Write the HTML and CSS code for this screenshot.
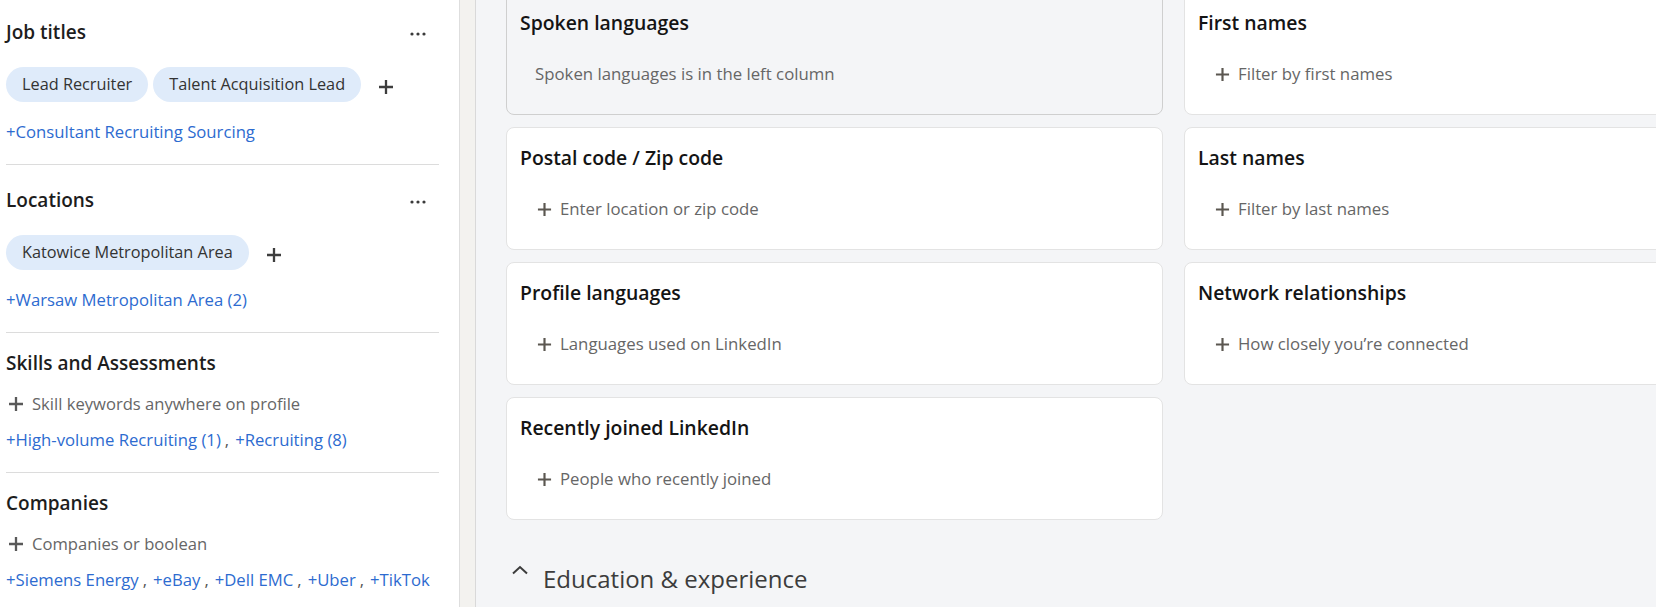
FILE: index.html
```html
<!DOCTYPE html>
<html lang="en">
<head>
    <meta charset="UTF-8">
    <meta name="viewport" content="width=device-width, initial-scale=1.0">
    <title>Search filters</title>
    <link rel="stylesheet" href="styles.css">
</head>
<body>
    <aside class="filters">
        <section class="filter">
            <div class="filter-head">
                <h3>Job titles</h3>
                <button class="more" aria-label="More options">
                    <svg width="16" height="4" viewBox="0 0 16 4"><circle cx="2" cy="2" r="1.6"/><circle cx="8" cy="2" r="1.6"/><circle cx="14" cy="2" r="1.6"/></svg>
                </button>
            </div>
            <div class="chips">
                <span class="chip">Lead Recruiter</span>
                <span class="chip">Talent Acquisition Lead</span>
                <button class="add-chip" aria-label="Add">
                    <svg width="16" height="16" viewBox="0 0 16 16"><path d="M8 1v14M1 8h14"/></svg>
                </button>
            </div>
            <div class="suggest"><a href="#">+Consultant Recruiting Sourcing</a></div>
        </section>

        <section class="filter">
            <div class="filter-head">
                <h3>Locations</h3>
                <button class="more" aria-label="More options">
                    <svg width="16" height="4" viewBox="0 0 16 4"><circle cx="2" cy="2" r="1.6"/><circle cx="8" cy="2" r="1.6"/><circle cx="14" cy="2" r="1.6"/></svg>
                </button>
            </div>
            <div class="chips">
                <span class="chip">Katowice Metropolitan Area</span>
                <button class="add-chip" aria-label="Add">
                    <svg width="16" height="16" viewBox="0 0 16 16"><path d="M8 1v14M1 8h14"/></svg>
                </button>
            </div>
            <div class="suggest"><a href="#">+Warsaw Metropolitan Area (2)</a></div>
        </section>

        <section class="filter">
            <div class="filter-head">
                <h3>Skills and Assessments</h3>
            </div>
            <div class="add-row">
                <svg width="16" height="16" viewBox="0 0 16 16"><path d="M8 1v14M1 8h14"/></svg>
                <span>Skill keywords anywhere on profile</span>
            </div>
            <div class="suggest tight"><a href="#">+High-volume Recruiting (1)</a><span class="sep">,</span><a href="#">+Recruiting (8)</a></div>
        </section>

        <section class="filter">
            <div class="filter-head">
                <h3>Companies</h3>
            </div>
            <div class="add-row">
                <svg width="16" height="16" viewBox="0 0 16 16"><path d="M8 1v14M1 8h14"/></svg>
                <span>Companies or boolean</span>
            </div>
            <div class="suggest tight"><a href="#">+Siemens Energy</a><span class="sep">,</span><a href="#">+eBay</a><span class="sep">,</span><a href="#">+Dell EMC</a><span class="sep">,</span><a href="#">+Uber</a><span class="sep">,</span><a href="#">+TikTok</a></div>
        </section>
    </aside>

    <div class="gutter"></div>

    <main class="content">
        <div class="card-grid">
            <div class="card disabled">
                <h4>Spoken languages</h4>
                <p class="note">Spoken languages is in the left column</p>
            </div>
            <div class="card">
                <h4>First names</h4>
                <div class="placeholder"><svg width="15" height="15" viewBox="0 0 16 16"><path d="M8 1v14M1 8h14"/></svg>Filter by first names</div>
            </div>
            <div class="card">
                <h4>Postal code / Zip code</h4>
                <div class="placeholder"><svg width="15" height="15" viewBox="0 0 16 16"><path d="M8 1v14M1 8h14"/></svg>Enter location or zip code</div>
            </div>
            <div class="card">
                <h4>Last names</h4>
                <div class="placeholder"><svg width="15" height="15" viewBox="0 0 16 16"><path d="M8 1v14M1 8h14"/></svg>Filter by last names</div>
            </div>
            <div class="card">
                <h4>Profile languages</h4>
                <div class="placeholder"><svg width="15" height="15" viewBox="0 0 16 16"><path d="M8 1v14M1 8h14"/></svg>Languages used on LinkedIn</div>
            </div>
            <div class="card">
                <h4>Network relationships</h4>
                <div class="placeholder"><svg width="15" height="15" viewBox="0 0 16 16"><path d="M8 1v14M1 8h14"/></svg>How closely you’re connected</div>
            </div>
            <div class="card">
                <h4>Recently joined LinkedIn</h4>
                <div class="placeholder"><svg width="15" height="15" viewBox="0 0 16 16"><path d="M8 1v14M1 8h14"/></svg>People who recently joined</div>
            </div>
        </div>

        <h2 class="group-title">
            <svg width="18" height="10" viewBox="0 0 18 10"><path d="M2 8.5L9 2 16 8.5"/></svg>
            Education &amp; experience
        </h2>
    </main>
</body>
</html>
```

FILE: styles.css
```css
* {
    box-sizing: border-box;
}
body {
    margin: 0;
    display: flex;
    height: 607px;
    overflow: hidden;
    font-family: 'Open Sans', 'Noto Sans', sans-serif;
    font-size: 16.6px;
    color: #1d1d1d;
    background: #fff;
}
button {
    border: none;
    background: none;
    padding: 0;
    cursor: pointer;
}

/* left filter column */
.filters {
    flex: 0 0 460px;
    min-width: 0;
    overflow: hidden;
    padding: 0 20px 0 6px;
    border-right: 1px solid #dedede;
    background: #fff;
}
.filter {
    padding: 17px 0 20px;
    border-bottom: 1px solid #dcdcdc;
}
.filter:first-child {
    padding-top: 14px;
}
.filter-head {
    display: flex;
    align-items: center;
    justify-content: space-between;
    min-height: 26px;
}
.filter-head h3 {
    margin: 0;
    font-size: 19px;
    font-weight: 600;
    line-height: 26px;
}
.more {
    display: flex;
    align-items: center;
    height: 36px;
    padding-top: 3px;
    margin-right: 13px;
}
.more svg {
    fill: #3a3a3a;
}
.chips {
    display: flex;
    align-items: center;
    gap: 5px;
    margin-top: 17px;
}
.chip {
    height: 35px;
    line-height: 35px;
    padding: 0 16px;
    border-radius: 18px;
    background: #dfebfa;
    color: #333;
    font-size: 16.3px;
    white-space: nowrap;
}
.add-chip {
    display: flex;
    margin: 5px 0 0 12px;
}
.add-chip svg,
.add-row svg {
    stroke: #3d3d3d;
    stroke-width: 2.3;
    fill: none;
}
.suggest {
    margin-top: 18px;
    line-height: 24px;
    font-size: 16.7px;
    color: #555;
    white-space: nowrap;
}
.suggest.tight {
    margin-top: 12px;
}
.suggest a {
    color: #2d6bd0;
    text-decoration: none;
}
.sep {
    margin: 0 6px 0 4px;
}
.add-row {
    display: flex;
    align-items: center;
    gap: 8px;
    margin-top: 16px;
    padding-left: 2px;
    line-height: 24px;
    color: #666;
}
.add-row svg {
    stroke: #595959;
}

/* thin strip between the columns */
.gutter {
    flex: 0 0 16px;
    background: #f3f2ef;
    border-right: 1px solid #d9d9d9;
}

/* main area */
.content {
    flex: 1;
    min-width: 0;
    overflow: hidden;
    background: #f4f5f7;
    padding-left: 30px;
}
.card-grid {
    display: grid;
    grid-template-columns: 657px 657px;
    column-gap: 21px;
    row-gap: 12px;
    margin-top: -8px;
}
.card {
    height: 123px;
    padding: 17px 13px 0;
    border: 1px solid #e3e3e3;
    border-radius: 8px;
    background: #fff;
}
.card.disabled {
    background: #f4f5f7;
    border-color: #cfcfcf;
}
.card h4 {
    margin: 0;
    font-size: 19.4px;
    font-weight: 600;
    line-height: 26px;
    color: #141414;
    white-space: nowrap;
}
.placeholder {
    display: flex;
    align-items: center;
    gap: 8px;
    margin-top: 26px;
    padding-left: 17px;
    line-height: 24px;
    font-size: 16.8px;
    color: #666;
    white-space: nowrap;
}
.placeholder svg {
    stroke: #5b5750;
    stroke-width: 2.3;
    fill: none;
}
.note {
    margin: 26px 0 0;
    padding-left: 15px;
    line-height: 24px;
    font-size: 16.8px;
    color: #666;
}
.group-title {
    display: flex;
    align-items: center;
    gap: 14px;
    margin: 42px 0 0;
    padding-left: 5px;
    font-size: 24px;
    font-weight: 400;
    line-height: 34px;
    color: #3c3c3c;
}
.group-title svg {
    margin-top: -18px;
    stroke: #3c3c3c;
    stroke-width: 2;
    fill: none;
}
```
